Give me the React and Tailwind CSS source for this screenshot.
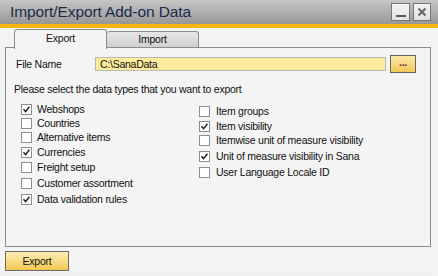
import React from "react";

function Box({ checked }) {
  return (
    <div className="w-[11px] h-[11px] border border-[#8e8e8e] bg-white flex items-center justify-center shrink-0">
      {checked && (
        <svg width="9" height="9" viewBox="0 0 9 9">
          <path d="M1.5 4.2 L3.6 6.6 L7.4 1.8" fill="none" stroke="#1a1a1a" strokeWidth="1.4" />
        </svg>
      )}
    </div>
  );
}

function Row({ label, checked, mt, gap }) {
  return (
    <div className={`flex items-center h-[11px] ${mt} ${gap}`}>
      <Box checked={checked} />
      <span className="leading-[11px] whitespace-nowrap">{label}</span>
    </div>
  );
}

export default function App() {
  return (
    <div
      className="w-[438px] h-[276px] bg-[#f4f4f4] text-[#111] overflow-hidden flex flex-col"
      style={{ fontFamily: '"Liberation Sans", Arial, sans-serif' }}
    >
      {/* Title bar */}
      <div className="h-[24px] shrink-0 flex items-center justify-between bg-gradient-to-b from-[#c6c6c6] to-[#979797] pl-[10px] pr-[7px]">
        <span className="text-[15.5px] text-[#1b2b48] leading-none tracking-[-0.1px]">Import/Export Add-on Data</span>
        <div className="flex gap-[3px]">
          <div className="w-[19px] h-[18px] border border-[#767676] bg-gradient-to-b from-[#f4f4f4] to-[#e2e2e2] flex items-end justify-center pb-[3px]">
            <div className="w-[10px] h-[2px] bg-[#5a5a5a]" />
          </div>
          <div className="w-[18px] h-[18px] border border-[#767676] bg-gradient-to-b from-[#f4f4f4] to-[#e2e2e2] flex items-center justify-center">
            <svg width="10" height="10" viewBox="0 0 10 10">
              <path d="M1.5 1.5 L8.5 8.5 M8.5 1.5 L1.5 8.5" stroke="#6a6a6a" strokeWidth="2.2" />
            </svg>
          </div>
        </div>
      </div>
      <div className="h-[4px] shrink-0 bg-[#f7b50f]" />

      {/* Tabs */}
      <div className="h-[20px] shrink-0 flex items-start pl-[14px] text-[10.5px] tracking-[-0.2px]">
        <div className="relative z-10 mt-[1px] w-[93px] h-[20px] border border-b-0 border-[#8c8c8c] rounded-t-[3px] bg-[#f4f4f4] flex items-center justify-center pb-[2px]">
          Export
        </div>
        <div className="mt-[3px] w-[92px] h-[17px] border border-l-0 border-b-0 border-[#8c8c8c] rounded-t-[3px] bg-gradient-to-b from-[#e6e6e6] to-[#cfcfcf] flex items-center justify-center">
          Import
        </div>
      </div>

      {/* Panel */}
      <div className="ml-[5px] -mt-[1px] w-[426px] h-[200px] shrink-0 border border-[#8c8c8c] bg-[#f4f4f4] text-[10.5px] tracking-[-0.25px]">
        <div className="flex items-center mt-[7px] h-[18px] pl-[10px]">
          <span className="w-[79px] leading-none">File Name</span>
          <div className="w-[291px] h-[14px] border border-[#b9b9b9] bg-[#fdec9c] flex items-center pl-[4px] leading-none">
            C:\SanaData
          </div>
          <div className="ml-[4px] w-[26px] h-[18px] border border-[#666] bg-gradient-to-b from-[#fbe9a6] to-[#f2c955] flex items-center justify-center text-[#6b1d1d] font-bold leading-none pb-[3px]">
            ...
          </div>
        </div>
        <div className="mt-[10px] pl-[8px] leading-[13px]">Please select the data types that you want to export</div>
        <div className="mt-[8px] pl-[15px] flex">
          <div className="w-[178px] flex flex-col">
            <Row label="Webshops" checked mt="" gap="gap-[5px]" />
            <Row label="Countries" mt="mt-[3px]" gap="gap-[5px]" />
            <Row label="Alternative items" mt="mt-[3px]" gap="gap-[5px]" />
            <Row label="Currencies" checked mt="mt-[4px]" gap="gap-[5px]" />
            <Row label="Freight setup" mt="mt-[4px]" gap="gap-[5px]" />
            <Row label="Customer assortment" mt="mt-[5px]" gap="gap-[5px]" />
            <Row label="Data validation rules" checked mt="mt-[5px]" gap="gap-[5px]" />
          </div>
          <div className="flex flex-col mt-[2px]">
            <Row label="Item groups" mt="" gap="gap-[6px]" />
            <Row label="Item visibility" checked mt="mt-[4px]" gap="gap-[6px]" />
            <Row label="Itemwise unit of measure visibility" mt="mt-[3px]" gap="gap-[6px]" />
            <Row label="Unit of measure visibility in Sana" checked mt="mt-[5px]" gap="gap-[6px]" />
            <Row label="User Language Locale ID" mt="mt-[5px]" gap="gap-[6px]" />
          </div>
        </div>
      </div>

      {/* Bottom */}
      <div className="ml-[5px] mt-[4px] w-[64px] h-[20px] shrink-0 border border-[#6b6b6b] bg-gradient-to-b from-[#fdeeb2] to-[#f2c84c] flex items-center justify-center text-[10.5px] tracking-[-0.2px] leading-none">
        Export
      </div>
      <div className="mt-[1px] flex-1 bg-[#efefef] w-[432px]" />
    </div>
  );
}
